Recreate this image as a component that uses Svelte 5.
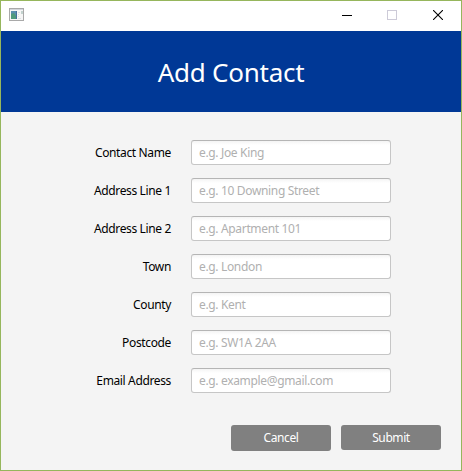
<script>
  const fields = [
    { id: 'name', label: 'Contact Name', hint: 'e.g. Joe King' },
    { id: 'line1', label: 'Address Line 1', hint: 'e.g. 10 Downing Street' },
    { id: 'line2', label: 'Address Line 2', hint: 'e.g. Apartment 101' },
    { id: 'town', label: 'Town', hint: 'e.g. London' },
    { id: 'county', label: 'County', hint: 'e.g. Kent' },
    { id: 'postcode', label: 'Postcode', hint: 'e.g. SW1A 2AA' },
    { id: 'email', label: 'Email Address', hint: 'e.g. example@gmail.com' }
  ];
</script>

<div class="window">
  <div class="titlebar">
    <svg class="app-icon" width="16" height="14" viewBox="0 0 16 14">
      <rect x="0.5" y="0.5" width="14" height="12" fill="#f6f6f6" stroke="#a9a9a9" />
      <path d="M1 1.5h13" stroke="#d3d6dc" />
      <rect x="2" y="3" width="6" height="8" fill="#5a8fae" />
      <path d="M2 6l3-1 2 3v3H2z" fill="#4f9a7c" />
      <path d="M7.5 3v8" stroke="#44709c" />
      <path d="M9 4.5h2M9 6.5h1M9 8.5h1M9 10.5h3" stroke="#dde2e4" />
      <rect x="12" y="3" width="2" height="3" fill="#c3d2ce" />
    </svg>
    <div class="controls">
      <svg width="10" height="10" viewBox="0 0 10 10"><path d="M0 5.5h10" stroke="#000" /></svg>
      <svg width="10" height="10" viewBox="0 0 10 10"><rect x="0.5" y="0.5" width="9" height="9" fill="none" stroke="#cdcbd8" /></svg>
      <svg width="10" height="10" viewBox="0 0 10 10"><path d="M0 0l10 10M10 0L0 10" stroke="#000" stroke-width="1.1" /></svg>
    </div>
  </div>

  <header><h1>Add Contact</h1></header>

  <form>
    <div class="fields">
      {#each fields as field}
        <div class="row">
          <label for={field.id}>{field.label}</label>
          <input id={field.id} type="text" placeholder={field.hint} />
        </div>
      {/each}
    </div>
    <div class="actions">
      <button type="button" class="cancel">Cancel</button>
      <button type="button">Submit</button>
    </div>
  </form>
</div>

<style>
  :global(body) { margin: 0; }
  .window {
    box-sizing: border-box;
    width: 462px;
    height: 471px;
    border: 1px solid #96b65c;
    background: #f4f4f4;
    display: flex;
    flex-direction: column;
    font-family: "Noto Sans", "Open Sans", sans-serif;
    overflow: hidden;
  }
  .titlebar {
    height: 30px;
    flex: none;
    box-sizing: border-box;
    background: #fff;
    display: flex;
    justify-content: space-between;
    padding: 7px 18px 0 8px;
  }
  svg { display: block; }
  .controls { display: flex; gap: 35px; padding-top: 2px; }
  .controls svg:last-child { margin-left: 1px; }
  header {
    height: 81px;
    flex: none;
    background: #003896;
    display: flex;
    align-items: center;
    justify-content: center;
  }
  h1 {
    margin: 0;
    font-size: 26px;
    line-height: 36px;
    font-weight: 400;
    color: #fff;
    letter-spacing: -0.25px;
    padding-top: 1px;
  }
  form { display: flex; flex-direction: column; padding-top: 28px; }
  .fields { display: flex; flex-direction: column; gap: 13px; }
  .row { display: flex; align-items: center; gap: 20px; height: 25px; }
  label {
    width: 170px;
    text-align: right;
    font-size: 12px;
    line-height: 17px;
    letter-spacing: -0.36px;
    color: #000;
    white-space: nowrap;
  }
  input {
    box-sizing: border-box;
    width: 200px;
    height: 25px;
    margin: 0;
    padding: 0 7px;
    border: 1px solid #c6c6c6;
    border-top-color: #b5b5b5;
    border-radius: 3px;
    background: linear-gradient(#f4f4f4, #fff 4px);
    font: 12px "Noto Sans", "Open Sans", sans-serif;
    letter-spacing: -0.34px;
    outline: none;
  }
  input::placeholder { color: #b0b0b0; opacity: 1; }
  .actions { display: flex; gap: 10px; padding: 32px 0 0 230px; }
  button {
    width: 100px;
    height: 25px;
    padding: 0;
    border: 0;
    border-radius: 3px;
    background: #808080;
    color: #fff;
    font: 12px "Noto Sans", "Open Sans", sans-serif;
    letter-spacing: -0.4px;
  }
  .cancel { height: 26px; padding-bottom: 1px; }
</style>
